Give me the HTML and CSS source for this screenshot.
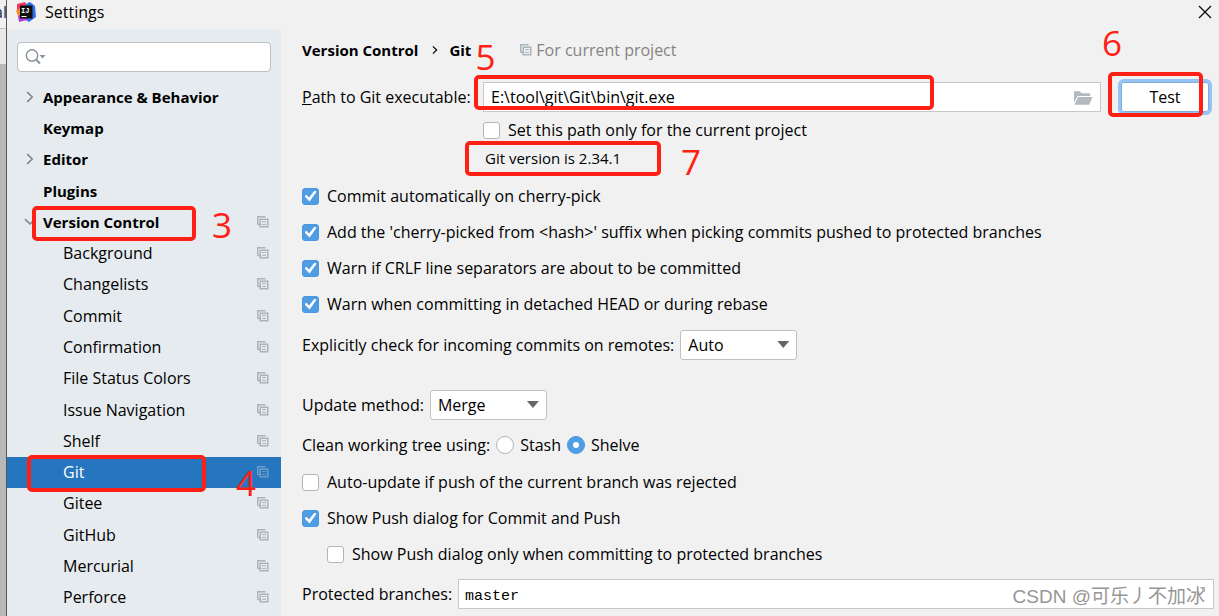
FILE: index.html
```html
<!DOCTYPE html>
<html lang="en">
<head>
<meta charset="utf-8">
<title>Settings</title>
<link rel="stylesheet" href="styles.css">
</head>
<body>
<svg width="0" height="0" class="defs" aria-hidden="true">
  <symbol id="copy" viewBox="0 0 12 12">
    <path d="M.75 8.5V.75H8.5M.75 8.5H3" fill="none" stroke="currentColor" stroke-width="1.5"/>
    <rect x="3.25" y="3.25" width="7.5" height="7.5" fill="none" stroke="currentColor" stroke-width="1.5"/>
    <path d="M5 5.6h4M5 8.4h4" stroke="currentColor" stroke-width="1"/>
  </symbol>
  <symbol id="right" viewBox="0 0 8 12"><path d="M1.2 1.2L6.2 6l-5 4.8" fill="none" stroke="currentColor" stroke-width="1.6"/></symbol>
  <symbol id="down" viewBox="0 0 12 8"><path d="M1 1.2l5 4.8 5-4.8" fill="none" stroke="currentColor" stroke-width="1.6"/></symbol>
</svg>
<div class="screen">
  <div class="behind"><div class="behind-text">al</div><div class="behind-bar"></div></div>
  <div class="dialog">
    <header class="titlebar">
      <svg class="logo" viewBox="0 0 20 20" aria-hidden="true">
        <path d="M1 2l8-2 3 5-8 8-3-2z" fill="#f5365c"/>
        <path d="M0 9l4-3 3 9-4 1z" fill="#f98b2b"/>
        <path d="M10 2l4-2 5 4 1 11-7 5-5-3z" fill="#2f6fe8"/>
        <path d="M2 14l4-2 7 5-2 1-8 2z" fill="#b13bd4"/>
        <rect x="4" y="3.500" width="12.500" height="13" fill="#111"/>
        <text x="5" y="10.500" class="logo-text">IJ</text>
        <path d="M5.500 14.500h5" stroke="#fff"/>
      </svg>
      <h1 class="title">Settings</h1>
      <button class="close" aria-label="Close"><svg viewBox="0 0 14 14"><path d="M1 1l12 12M13 1L1 13" stroke="#111" stroke-width="1.400"/></svg></button>
    </header>
    <div class="body">
      <nav class="sidebar">
        <div class="search">
          <svg viewBox="0 0 22 16" aria-hidden="true"><circle cx="7" cy="6.500" r="5.700" fill="none" stroke="#87929b" stroke-width="1.400"/><path d="M11 10.500l4 4" stroke="#87929b" stroke-width="2"/><path d="M14.500 6h6l-3 3.500z" fill="#87929b"/></svg>
          <input type="text" aria-label="Search settings">
        </div>
        <ul class="tree">
          <li class="group"><svg class="arrow"><use href="#right"/></svg><span>Appearance &amp; Behavior</span></li>
          <li class="group"><span>Keymap</span></li>
          <li class="group"><svg class="arrow"><use href="#right"/></svg><span>Editor</span></li>
          <li class="group"><span>Plugins</span></li>
          <li class="group"><svg class="arrow open"><use href="#down"/></svg><span>Version Control</span><svg class="copy"><use href="#copy"/></svg><i class="mark mark-vc"></i><b class="num num-3">3</b></li>
          <li><span>Background</span><svg class="copy"><use href="#copy"/></svg></li>
          <li><span>Changelists</span><svg class="copy"><use href="#copy"/></svg></li>
          <li><span>Commit</span><svg class="copy"><use href="#copy"/></svg></li>
          <li><span>Confirmation</span><svg class="copy"><use href="#copy"/></svg></li>
          <li><span>File Status Colors</span><svg class="copy"><use href="#copy"/></svg></li>
          <li><span>Issue Navigation</span><svg class="copy"><use href="#copy"/></svg></li>
          <li><span>Shelf</span><svg class="copy"><use href="#copy"/></svg></li>
          <li class="selected"><span>Git</span><svg class="copy"><use href="#copy"/></svg><i class="mark mark-git"></i><b class="num num-4">4</b></li>
          <li><span>Gitee</span><svg class="copy"><use href="#copy"/></svg></li>
          <li><span>GitHub</span><svg class="copy"><use href="#copy"/></svg></li>
          <li><span>Mercurial</span><svg class="copy"><use href="#copy"/></svg></li>
          <li><span>Perforce</span><svg class="copy"><use href="#copy"/></svg></li>
        </ul>
      </nav>
      <main class="main">
        <div class="crumbs">
          <strong>Version Control</strong><svg class="sep"><use href="#right"/></svg><strong class="current">Git<b class="num num-5">5</b></strong>
          <span class="scope"><svg class="copy"><use href="#copy"/></svg>For current project</span>
        </div>
        <div class="path">
          <label for="path"><u>P</u>ath to Git executable:</label>
          <div class="field">
            <input id="path" type="text" value="E:\tool\git\Git\bin\git.exe">
            <svg class="folder" viewBox="0 0 20 14" aria-hidden="true"><path d="M0 0h6l2 2h9v3H4L0 12z" fill="#b3babf"/><path d="M4.500 6H19.500L16 14H.5z" fill="#b3babf"/></svg>
            <i class="mark mark-path"></i>
          </div>
          <div class="test-wrap"><button class="test">Test</button><i class="mark mark-test"></i><b class="num num-6">6</b></div>
        </div>
        <div class="under">
          <label class="option"><input type="checkbox">Set this path only for the current project</label>
          <div class="version">Git version is 2.34.1<i class="mark mark-version"></i><b class="num num-7">7</b></div>
        </div>
        <div class="checks">
          <label class="option"><input type="checkbox" checked>Commit automatically on cherry-pick</label>
          <label class="option"><input type="checkbox" checked>Add the 'cherry-picked from &lt;hash&gt;' suffix when picking commits pushed to protected branches</label>
          <label class="option"><input type="checkbox" checked>Warn if CRLF line separators are about to be committed</label>
          <label class="option"><input type="checkbox" checked>Warn when committing in detached HEAD or during rebase</label>
        </div>
        <div class="row incoming">
          <label for="incoming">Explicitly check for incoming commits on remotes:</label>
          <div class="combo"><select id="incoming"><option>Auto</option></select></div>
        </div>
        <div class="row update">
          <label for="update">Update method:</label>
          <div class="combo"><select id="update"><option>Merge</option></select></div>
        </div>
        <div class="row clean" role="radiogroup" aria-label="Clean working tree using">
          <span>Clean working tree using:</span>
          <label class="radio"><input type="radio" name="clean">Stash</label>
          <label class="radio"><input type="radio" name="clean" checked>Shelve</label>
        </div>
        <div class="push">
          <label class="option"><input type="checkbox">Auto-update if push of the current branch was rejected</label>
          <label class="option"><input type="checkbox" checked>Show Push dialog for Commit and Push</label>
          <label class="option nested"><input type="checkbox">Show Push dialog only when committing to protected branches</label>
        </div>
        <div class="row protected">
          <label for="protected">Protected branches:</label>
          <div class="field">
            <input id="protected" class="mono" type="text" value="master">
            <svg class="expand" viewBox="0 0 8 8" aria-hidden="true"><path d="M1 0h7v7z" fill="#aab2b8"/></svg>
            <span class="watermark">CSDN @可乐丿不加冰</span>
          </div>
        </div>
      </main>
    </div>
  </div>
</div>
</body>
</html>
```
FILE: styles.css
```css
* { box-sizing: border-box; }
body {
  margin: 0;
  background: #f1f1f1;
  color: #000;
  font: 16px/20px "Open Sans", "Noto Sans CJK SC", sans-serif;
}
input, select, button { font: inherit; color: inherit; margin: 0; }
strong { font-size: 15px; }
.defs { position: absolute; }
.screen { display: flex; min-height: 100vh; }
.behind {
  width: 7px;
  flex: none;
  overflow: hidden;
  background: #b8b8b8;
  border-right: 1px solid #555;
}
.behind-text { height: 29px; padding-top: 2px; background: #f0f0f0; border-bottom: 1px solid #c4c4c4; color: #1d2b4f; margin-left: -6px; }
.behind-bar { height: 35px; background: #e8e8e8; }
.dialog { flex: 1; min-width: 0; display: flex; flex-direction: column; }
.titlebar { display: flex; align-items: center; height: 29px; padding: 0 7px 5px 9px; }
.logo { width: 20px; height: 20px; margin-right: 9px; }
.logo-text { font: 700 7px "Liberation Mono", monospace; fill: #fff; }
.title { margin: 0; flex: 1; font-size: 16px; font-weight: 400; }
.close { width: 14px; height: 14px; padding: 0; border: 0; background: none; }
.close svg { display: block; width: 14px; height: 14px; }
.body { flex: 1; display: flex; }
.sidebar { width: 274px; flex: none; display: flex; flex-direction: column; background: #e6ebef; padding: 13px 0 3px; }
.search { position: relative; margin: 0 10px 9px; height: 30px; }
.search input { width: 100%; height: 30px; padding: 0 8px 0 30px; border: 1px solid #c0c0c0; border-radius: 4px; background: #fff; }
.search svg { position: absolute; left: 8px; top: 7px; width: 22px; height: 16px; }
.tree { flex: 1; display: grid; grid-auto-rows: 1fr; margin: 0; padding: 0; list-style: none; }
.tree li { position: relative; display: flex; align-items: center; padding: 0 12px 0 56px; }
.tree span { flex: 1; }
.tree .group { padding-left: 36px; font-size: 15px; font-weight: 700; }
.tree .selected { background: #2675bf; color: #fff; }
.copy { width: 12px; height: 12px; color: #a9b3ba; flex: none; }
.selected .copy { color: #6c9ec9; }
.arrow { position: absolute; left: 19px; width: 8px; height: 12px; color: #7f868b; }
.arrow.open { left: 17px; width: 12px; height: 8px; }
.main { flex: 1; min-width: 0; padding: 6px 5px 0 21px; }
.crumbs { display: flex; align-items: center; height: 30px; margin-bottom: 17px; }
.sep { width: 6px; height: 10px; margin: 0 11px 0 14px; }
.current { position: relative; }
.scope { display: flex; align-items: center; gap: 4px; margin-left: 49px; color: #848484; }
.path { display: grid; grid-template-columns: 181px 1fr 94px; grid-template-rows: 30px; align-items: center; padding-right: 2px; }
.field { position: relative; flex: 1; }
.path .field { margin-right: 17px; }
.field input { display: block; width: 100%; height: 30px; padding: 0 8px 0 7px; border: 1px solid #c8c8c8; background: #fff; }
.field .mono { font: 15px "Liberation Mono", monospace; padding: 4px 6px 0; }
.folder { position: absolute; right: 8px; top: 9px; width: 19px; height: 14px; }
.expand { position: absolute; right: 9px; top: 8px; width: 6px; height: 6px; }
.test-wrap { position: relative; height: 36px; }
.test { width: 100%; height: 36px; border: 3px solid #96c3f3; border-radius: 6px; background: #fff; box-shadow: inset 0 0 0 1px #7eaee0; padding: 0; }
.under { margin: 4px 0 6px 181px; }
.under .option, .version { height: 28px; }
.version { position: relative; width: max-content; display: flex; align-items: center; padding-left: 2px; font-size: 15px; }
.option { display: flex; align-items: center; gap: 8px; height: 36px; }
.option input, .radio input { appearance: none; flex: none; width: 17px; height: 17px; border: 1px solid #b5b5b5; border-radius: 3px; background: #fff; display: grid; place-items: center; }
.option input:checked { border-color: #4b97df; background: #4f9ee3; }
.option input:checked::after { content: ""; width: 12px; height: 11px; background: #fff; clip-path: polygon(0 52%, 15% 38%, 38% 64%, 84% 0, 100% 12%, 42% 100%); }
.row { display: flex; align-items: center; min-height: 30px; gap: 6px; }
.incoming { margin-top: 8px; }
.update { margin: 30px 0 7px; }
.combo { position: relative; width: 117px; }
.combo select { appearance: none; display: block; width: 100%; height: 30px; padding: 0 7px; border: 1px solid #c0c0c0; border-radius: 3px; background: #fff; }
.combo::after { content: ""; position: absolute; right: 8px; top: 11px; width: 12px; height: 7px; background: #666; clip-path: polygon(0 0, 100% 0, 50% 100%); pointer-events: none; }
.clean { height: 36px; }
.radio { display: flex; align-items: center; gap: 6px; }
.radio input { width: 18px; height: 18px; border-radius: 50%; }
.radio input:checked { border-color: #4b97df; background: #4f9ee3; }
.radio input:checked::after { content: ""; width: 6px; height: 6px; border-radius: 50%; background: #fff; }
.push { margin-top: 1px; }
.nested { margin-left: 25px; }
.protected { margin-top: 7px; }
.watermark { position: absolute; right: 9px; top: 6px; font: 19px/24px "Liberation Sans", "Noto Sans CJK SC", sans-serif; color: #969696; white-space: nowrap; }

/* Red tutorial annotations */
.mark { position: absolute; border: 4px solid #ff2015; border-radius: 5px; pointer-events: none; }
.num { position: absolute; font-size: 35px; line-height: 36px; font-weight: 400; color: #ff2015; pointer-events: none; }
.mark-vc { left: 25px; top: 0; width: 164px; height: 35px; z-index: 1; }
.num-3 { left: 205px; top: 1px; }
.mark-git { left: 20px; top: -2px; width: 179px; height: 37px; z-index: 1; }
.num-4 { left: 229px; top: 8px; z-index: 1; }
.num-5 { left: 26px; top: -1px; }
.mark-path { left: -9px; top: -7px; width: 460px; height: 35px; }
.mark-test { left: -10px; top: -7px; width: 95px; height: 45px; }
.num-6 { left: -16px; top: -54px; }
.mark-version { left: -18px; top: -3px; width: 196px; height: 35px; }
.num-7 { left: 198px; top: 0; }
```
